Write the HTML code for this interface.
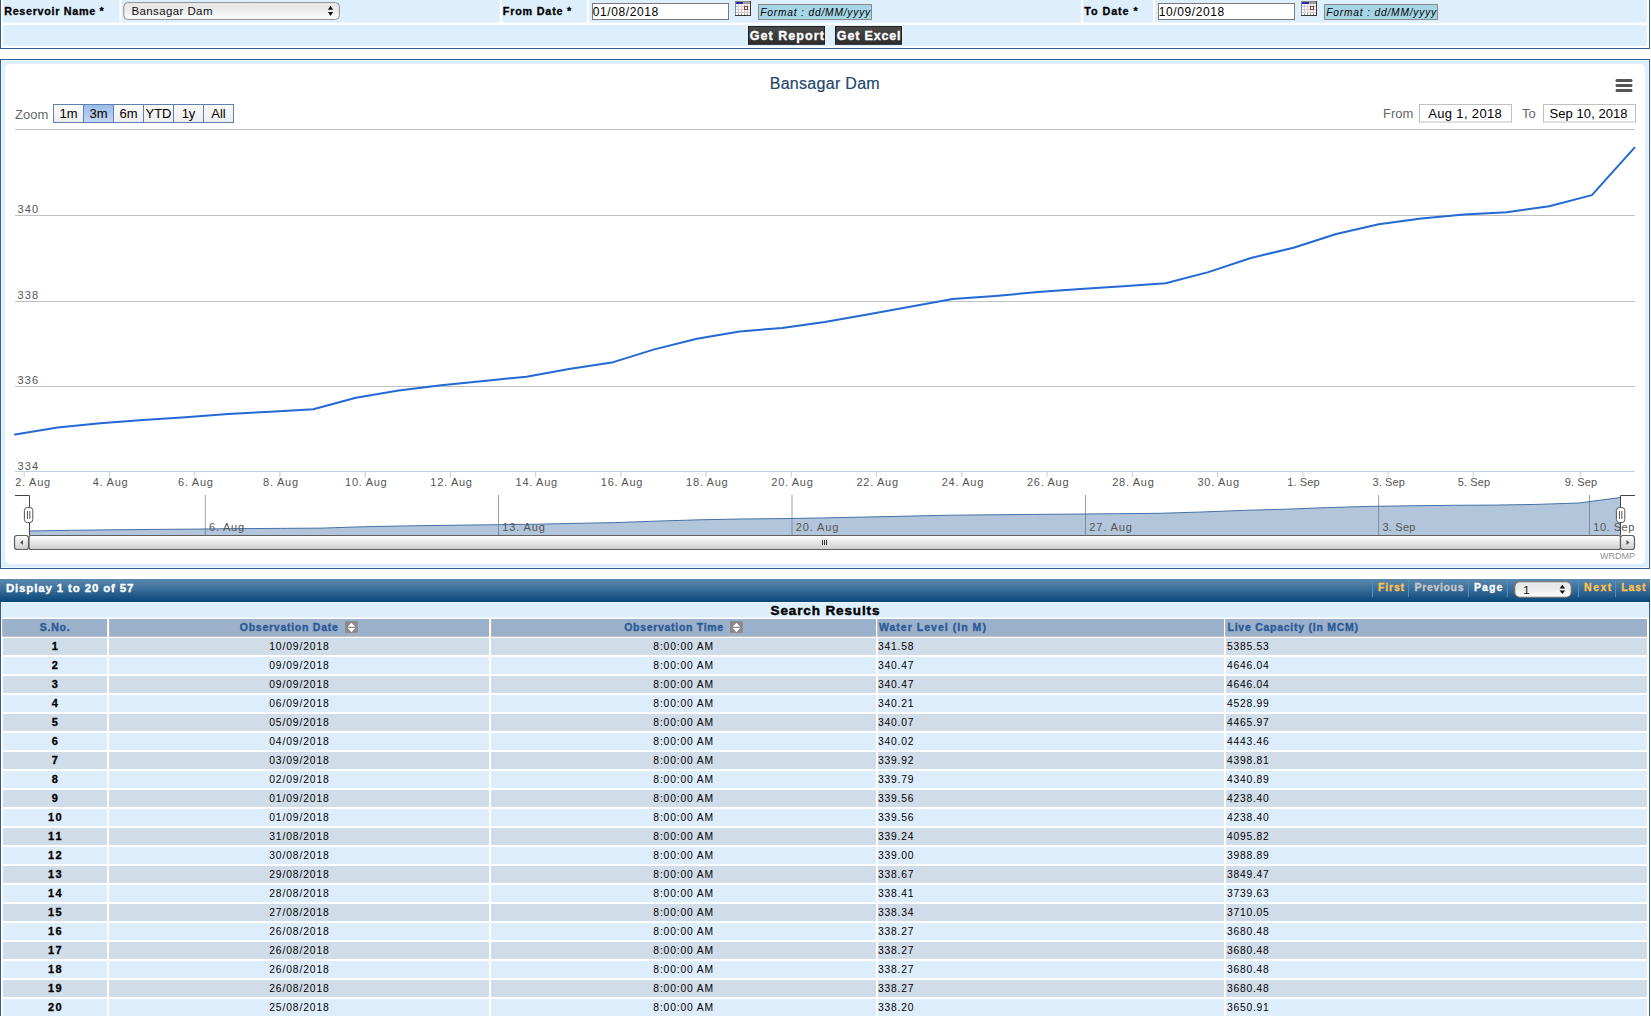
<!DOCTYPE html><html><head><meta charset="utf-8"><style>html,body{margin:0;padding:0;background:#fff;overflow:hidden}svg{display:block}text{font-family:"Liberation Sans",sans-serif;white-space:pre}</style></head><body>
<svg width="1651" height="1016" viewBox="0 0 1651 1016">
<defs>
<linearGradient id="gSel" x1="0" y1="0" x2="0" y2="1"><stop offset="0" stop-color="#f4f4f4"/><stop offset="0.15" stop-color="#e7e7e7"/><stop offset="0.5" stop-color="#ececec"/><stop offset="1" stop-color="#ffffff"/></linearGradient>
<linearGradient id="gBar" x1="0" y1="0" x2="0" y2="1"><stop offset="0" stop-color="#5a89ad"/><stop offset="0.45" stop-color="#3a6e99"/><stop offset="1" stop-color="#06457a"/></linearGradient>
<linearGradient id="gBtn" x1="0" y1="0" x2="0" y2="1"><stop offset="0" stop-color="#fbfbfb"/><stop offset="1" stop-color="#ededed"/></linearGradient>
<linearGradient id="gBtnSel" x1="0" y1="0" x2="0" y2="1"><stop offset="0" stop-color="#9bbbe4"/><stop offset="1" stop-color="#c4d7f4"/></linearGradient>
<linearGradient id="gScroll" x1="0" y1="0" x2="0" y2="1"><stop offset="0" stop-color="#ffffff"/><stop offset="1" stop-color="#cccccc"/></linearGradient>
<linearGradient id="gBtnDark" x1="0" y1="0" x2="0" y2="1"><stop offset="0" stop-color="#4a4a4a"/><stop offset="1" stop-color="#2e2e2e"/></linearGradient>
</defs>
<rect x="0" y="0" width="1" height="49" fill="#305e95"/>
<rect x="1649" y="0" width="1" height="49" fill="#305e95"/>
<rect x="0" y="48" width="1650" height="1" fill="#305e95"/>
<rect x="3" y="0" width="116.5" height="22.6" fill="#ddeefd"/>
<rect x="121.5" y="0" width="378.5" height="22.6" fill="#ddeefd"/>
<rect x="502" y="0" width="85" height="22.6" fill="#ddeefd"/>
<rect x="589" y="0" width="492" height="22.6" fill="#ddeefd"/>
<rect x="1083" y="0" width="70" height="22.6" fill="#ddeefd"/>
<rect x="1155" y="0" width="492" height="22.6" fill="#ddeefd"/>
<rect x="3" y="24.9" width="1644" height="21" fill="#ddeefd"/>
<text x="4.2" y="15.2" font-size="10.8" fill="#000" font-weight="bold" letter-spacing="0" text-anchor="start" font-style="normal" textLength="99.5" lengthAdjust="spacing" stroke="#000" stroke-width="0.3" >Reservoir Name *</text>
<text x="502.8" y="15" font-size="10.8" fill="#000" font-weight="bold" letter-spacing="0" text-anchor="start" font-style="normal" textLength="68.5" lengthAdjust="spacing" stroke="#000" stroke-width="0.3" >From Date *</text>
<text x="1084.2" y="15" font-size="10.8" fill="#000" font-weight="bold" letter-spacing="0" text-anchor="start" font-style="normal" textLength="53.5" lengthAdjust="spacing" stroke="#000" stroke-width="0.3" >To Date *</text>
<rect x="123.8" y="2.6" width="215.6" height="16.8" rx="4" fill="url(#gSel)" stroke="#8e8e8e" stroke-width="1"/>
<text x="131.4" y="14.8" font-size="11.5" fill="#111" font-weight="normal" letter-spacing="0.4" text-anchor="start" font-style="normal" >Bansagar Dam</text>
<path d="M327.9,9.8 L333.1,9.8 L330.5,5.8 Z M327.9,12.1 L333.1,12.1 L330.5,16 Z" fill="#111"/>
<rect x="592.5" y="3.5" width="136" height="16" fill="#fff" stroke="#7a7a7a" stroke-width="1"/>
<text x="592.8" y="16" font-size="12" fill="#000" font-weight="normal" letter-spacing="0.6" text-anchor="start" font-style="normal" >01/08/2018</text>
<rect x="735" y="1" width="16" height="15" fill="#3a3a3a"/>
<rect x="735" y="1" width="15" height="14" fill="#8a8a8a"/>
<rect x="736" y="2" width="14" height="12" fill="#cbcbcb"/>
<rect x="736" y="2" width="14" height="2" fill="#9c9c9c"/><rect x="736" y="2" width="7" height="2" fill="#2d2d9c"/>
<rect x="736" y="4" width="2" height="2" fill="#fff"/>
<rect x="736" y="7" width="2" height="2" fill="#fff"/>
<rect x="736" y="10" width="2" height="2" fill="#fff"/>
<rect x="736" y="13" width="2" height="2" fill="#fff"/>
<rect x="739" y="4" width="2" height="2" fill="#fff"/>
<rect x="739" y="7" width="2" height="2" fill="#fff"/>
<rect x="739" y="10" width="2" height="2" fill="#fff"/>
<rect x="739" y="13" width="2" height="2" fill="#fff"/>
<rect x="742" y="4" width="2" height="2" fill="#fff"/>
<rect x="742" y="7" width="2" height="2" fill="#fff"/>
<rect x="742" y="10" width="2" height="2" fill="#fff"/>
<rect x="742" y="13" width="2" height="2" fill="#fff"/>
<rect x="745" y="4" width="2" height="2" fill="#fff"/>
<rect x="745" y="7" width="2" height="2" fill="#fff"/>
<rect x="745" y="10" width="2" height="2" fill="#fff"/>
<rect x="745" y="13" width="2" height="2" fill="#fff"/>
<rect x="748" y="4" width="2" height="2" fill="#fff"/>
<rect x="748" y="7" width="2" height="2" fill="#fff"/>
<rect x="748" y="10" width="2" height="2" fill="#fff"/>
<rect x="748" y="13" width="2" height="2" fill="#fff"/>
<rect x="744.5" y="6.5" width="3" height="3" fill="#fff" stroke="#a83030" stroke-width="1"/>
<rect x="758.5" y="4.5" width="113" height="15" fill="#a6d6e6" stroke="#8a8a8a" stroke-width="1"/>
<text x="760.2" y="15.6" font-size="10.2" fill="#000" font-weight="normal" letter-spacing="0" text-anchor="start" font-style="italic" textLength="110" lengthAdjust="spacing" >Format : dd/MM/yyyy</text>
<rect x="1158.5" y="3.5" width="136" height="16" fill="#fff" stroke="#7a7a7a" stroke-width="1"/>
<text x="1158.8" y="16" font-size="12" fill="#000" font-weight="normal" letter-spacing="0.6" text-anchor="start" font-style="normal" >10/09/2018</text>
<rect x="1301" y="1" width="16" height="15" fill="#3a3a3a"/>
<rect x="1301" y="1" width="15" height="14" fill="#8a8a8a"/>
<rect x="1302" y="2" width="14" height="12" fill="#cbcbcb"/>
<rect x="1302" y="2" width="14" height="2" fill="#9c9c9c"/><rect x="1302" y="2" width="7" height="2" fill="#2d2d9c"/>
<rect x="1302" y="4" width="2" height="2" fill="#fff"/>
<rect x="1302" y="7" width="2" height="2" fill="#fff"/>
<rect x="1302" y="10" width="2" height="2" fill="#fff"/>
<rect x="1302" y="13" width="2" height="2" fill="#fff"/>
<rect x="1305" y="4" width="2" height="2" fill="#fff"/>
<rect x="1305" y="7" width="2" height="2" fill="#fff"/>
<rect x="1305" y="10" width="2" height="2" fill="#fff"/>
<rect x="1305" y="13" width="2" height="2" fill="#fff"/>
<rect x="1308" y="4" width="2" height="2" fill="#fff"/>
<rect x="1308" y="7" width="2" height="2" fill="#fff"/>
<rect x="1308" y="10" width="2" height="2" fill="#fff"/>
<rect x="1308" y="13" width="2" height="2" fill="#fff"/>
<rect x="1311" y="4" width="2" height="2" fill="#fff"/>
<rect x="1311" y="7" width="2" height="2" fill="#fff"/>
<rect x="1311" y="10" width="2" height="2" fill="#fff"/>
<rect x="1311" y="13" width="2" height="2" fill="#fff"/>
<rect x="1314" y="4" width="2" height="2" fill="#fff"/>
<rect x="1314" y="7" width="2" height="2" fill="#fff"/>
<rect x="1314" y="10" width="2" height="2" fill="#fff"/>
<rect x="1314" y="13" width="2" height="2" fill="#fff"/>
<rect x="1310.5" y="6.5" width="3" height="3" fill="#fff" stroke="#a83030" stroke-width="1"/>
<rect x="1324.5" y="4.5" width="113" height="15" fill="#a6d6e6" stroke="#8a8a8a" stroke-width="1"/>
<text x="1326.2" y="15.6" font-size="10.2" fill="#000" font-weight="normal" letter-spacing="0" text-anchor="start" font-style="italic" textLength="110" lengthAdjust="spacing" >Format : dd/MM/yyyy</text>
<rect x="748.5" y="26.5" width="76" height="17.8" fill="url(#gBtnDark)" stroke="#222"/>
<text x="749.8" y="39.7" font-size="12.5" fill="#fff" font-weight="bold" letter-spacing="0" text-anchor="start" font-style="normal" textLength="74" lengthAdjust="spacing" stroke="#fff" stroke-width="0.35" >Get Report</text>
<rect x="835.5" y="26.5" width="66" height="17.8" fill="url(#gBtnDark)" stroke="#222"/>
<text x="836.8" y="39.7" font-size="12.5" fill="#fff" font-weight="bold" letter-spacing="0" text-anchor="start" font-style="normal" textLength="63.8" lengthAdjust="spacing" stroke="#fff" stroke-width="0.35" >Get Excel</text>
<rect x="0" y="59" width="1650" height="510" fill="#305e95"/>
<rect x="1" y="60" width="1648" height="508" fill="#eef8ff"/>
<rect x="2" y="61" width="1646" height="506" fill="#ddeefd"/>
<rect x="4.9" y="64" width="1640.2" height="500" rx="5" fill="#fff"/>
<text x="824.7" y="88.9" font-size="16" fill="#23466b" font-weight="normal" letter-spacing="0" text-anchor="middle" font-style="normal" textLength="110" lengthAdjust="spacing" stroke="#23466b" stroke-width="0.2" >Bansagar Dam</text>
<line x1="1617" y1="80.5" x2="1631" y2="80.5" stroke="#555" stroke-width="3" stroke-linecap="round"/>
<line x1="1617" y1="85.5" x2="1631" y2="85.5" stroke="#555" stroke-width="3" stroke-linecap="round"/>
<line x1="1617" y1="90.5" x2="1631" y2="90.5" stroke="#555" stroke-width="3" stroke-linecap="round"/>
<text x="15" y="118.6" font-size="13" fill="#666" font-weight="normal" letter-spacing="0" text-anchor="start" font-style="normal" >Zoom</text>
<rect x="53.5" y="104.5" width="30" height="18" fill="url(#gBtn)" stroke="#5d80b0" stroke-width="1"/>
<text x="68.5" y="118.3" font-size="13" fill="#000" font-weight="normal" letter-spacing="0" text-anchor="middle" font-style="normal" >1m</text>
<rect x="83.5" y="104.5" width="30" height="18" fill="url(#gBtnSel)" stroke="#5d80b0" stroke-width="1"/>
<text x="98.5" y="118.3" font-size="13" fill="#000" font-weight="normal" letter-spacing="0" text-anchor="middle" font-style="normal" >3m</text>
<rect x="113.5" y="104.5" width="30" height="18" fill="url(#gBtn)" stroke="#5d80b0" stroke-width="1"/>
<text x="128.5" y="118.3" font-size="13" fill="#000" font-weight="normal" letter-spacing="0" text-anchor="middle" font-style="normal" >6m</text>
<rect x="143.5" y="104.5" width="30" height="18" fill="url(#gBtn)" stroke="#5d80b0" stroke-width="1"/>
<text x="158.5" y="118.3" font-size="13" fill="#000" font-weight="normal" letter-spacing="0" text-anchor="middle" font-style="normal" >YTD</text>
<rect x="173.5" y="104.5" width="30" height="18" fill="url(#gBtn)" stroke="#5d80b0" stroke-width="1"/>
<text x="188.5" y="118.3" font-size="13" fill="#000" font-weight="normal" letter-spacing="0" text-anchor="middle" font-style="normal" >1y</text>
<rect x="203.5" y="104.5" width="30" height="18" fill="url(#gBtn)" stroke="#5d80b0" stroke-width="1"/>
<text x="218.5" y="118.3" font-size="13" fill="#000" font-weight="normal" letter-spacing="0" text-anchor="middle" font-style="normal" >All</text>
<text x="1383" y="118" font-size="13" fill="#666" font-weight="normal" letter-spacing="0" text-anchor="start" font-style="normal" >From</text>
<rect x="1419.5" y="104.5" width="92" height="17.5" fill="#fff" stroke="#c0c0c0"/>
<text x="1465" y="118.3" font-size="13" fill="#000" font-weight="normal" letter-spacing="0" text-anchor="middle" font-style="normal" textLength="73.5" lengthAdjust="spacing" >Aug 1, 2018</text>
<text x="1522" y="118" font-size="13" fill="#666" font-weight="normal" letter-spacing="0" text-anchor="start" font-style="normal" >To</text>
<rect x="1543.5" y="104.5" width="92" height="17.5" fill="#fff" stroke="#c0c0c0"/>
<text x="1588.6" y="118.3" font-size="13" fill="#000" font-weight="normal" letter-spacing="0" text-anchor="middle" font-style="normal" textLength="78" lengthAdjust="spacing" >Sep 10, 2018</text>
<rect x="15" y="129" width="1620" height="1" fill="#c0c0c0"/>
<rect x="15" y="215" width="1620" height="1" fill="#c0c0c0"/>
<text x="17.5" y="212.8" font-size="11" fill="#555" font-weight="normal" letter-spacing="0" text-anchor="start" font-style="normal" textLength="20.5" lengthAdjust="spacing" >340</text>
<rect x="15" y="301" width="1620" height="1" fill="#c0c0c0"/>
<text x="17.5" y="298.8" font-size="11" fill="#555" font-weight="normal" letter-spacing="0" text-anchor="start" font-style="normal" textLength="20.5" lengthAdjust="spacing" >338</text>
<rect x="15" y="386" width="1620" height="1" fill="#c0c0c0"/>
<text x="17.5" y="383.8" font-size="11" fill="#555" font-weight="normal" letter-spacing="0" text-anchor="start" font-style="normal" textLength="20.5" lengthAdjust="spacing" >336</text>
<text x="17.5" y="469.7" font-size="11" fill="#555" font-weight="normal" letter-spacing="0" text-anchor="start" font-style="normal" textLength="20.5" lengthAdjust="spacing" >334</text>
<rect x="15" y="471" width="1620" height="1" fill="#c0d0e0"/>
<rect x="23.7" y="472" width="1" height="5" fill="#c0d0e0"/>
<text x="15.2" y="486.2" font-size="11" fill="#555" font-weight="normal" letter-spacing="0" text-anchor="start" font-style="normal" textLength="35" lengthAdjust="spacing" >2. Aug</text>
<rect x="108.9" y="472" width="1" height="5" fill="#c0d0e0"/>
<text x="110.14" y="486.2" font-size="11" fill="#555" font-weight="normal" letter-spacing="0" text-anchor="middle" font-style="normal" textLength="35" lengthAdjust="spacing" >4. Aug</text>
<rect x="194.2" y="472" width="1" height="5" fill="#c0d0e0"/>
<text x="195.37999999999997" y="486.2" font-size="11" fill="#555" font-weight="normal" letter-spacing="0" text-anchor="middle" font-style="normal" textLength="35" lengthAdjust="spacing" >6. Aug</text>
<rect x="279.4" y="472" width="1" height="5" fill="#c0d0e0"/>
<text x="280.61999999999995" y="486.2" font-size="11" fill="#555" font-weight="normal" letter-spacing="0" text-anchor="middle" font-style="normal" textLength="35" lengthAdjust="spacing" >8. Aug</text>
<rect x="364.7" y="472" width="1" height="5" fill="#c0d0e0"/>
<text x="365.85999999999996" y="486.2" font-size="11" fill="#555" font-weight="normal" letter-spacing="0" text-anchor="middle" font-style="normal" textLength="41.5" lengthAdjust="spacing" >10. Aug</text>
<rect x="449.9" y="472" width="1" height="5" fill="#c0d0e0"/>
<text x="451.09999999999997" y="486.2" font-size="11" fill="#555" font-weight="normal" letter-spacing="0" text-anchor="middle" font-style="normal" textLength="41.5" lengthAdjust="spacing" >12. Aug</text>
<rect x="535.1" y="472" width="1" height="5" fill="#c0d0e0"/>
<text x="536.34" y="486.2" font-size="11" fill="#555" font-weight="normal" letter-spacing="0" text-anchor="middle" font-style="normal" textLength="41.5" lengthAdjust="spacing" >14. Aug</text>
<rect x="620.4" y="472" width="1" height="5" fill="#c0d0e0"/>
<text x="621.58" y="486.2" font-size="11" fill="#555" font-weight="normal" letter-spacing="0" text-anchor="middle" font-style="normal" textLength="41.5" lengthAdjust="spacing" >16. Aug</text>
<rect x="705.6" y="472" width="1" height="5" fill="#c0d0e0"/>
<text x="706.82" y="486.2" font-size="11" fill="#555" font-weight="normal" letter-spacing="0" text-anchor="middle" font-style="normal" textLength="41.5" lengthAdjust="spacing" >18. Aug</text>
<rect x="790.9" y="472" width="1" height="5" fill="#c0d0e0"/>
<text x="792.0600000000001" y="486.2" font-size="11" fill="#555" font-weight="normal" letter-spacing="0" text-anchor="middle" font-style="normal" textLength="41.5" lengthAdjust="spacing" >20. Aug</text>
<rect x="876.1" y="472" width="1" height="5" fill="#c0d0e0"/>
<text x="877.3000000000001" y="486.2" font-size="11" fill="#555" font-weight="normal" letter-spacing="0" text-anchor="middle" font-style="normal" textLength="41.5" lengthAdjust="spacing" >22. Aug</text>
<rect x="961.3" y="472" width="1" height="5" fill="#c0d0e0"/>
<text x="962.5400000000001" y="486.2" font-size="11" fill="#555" font-weight="normal" letter-spacing="0" text-anchor="middle" font-style="normal" textLength="41.5" lengthAdjust="spacing" >24. Aug</text>
<rect x="1046.6" y="472" width="1" height="5" fill="#c0d0e0"/>
<text x="1047.78" y="486.2" font-size="11" fill="#555" font-weight="normal" letter-spacing="0" text-anchor="middle" font-style="normal" textLength="41.5" lengthAdjust="spacing" >26. Aug</text>
<rect x="1131.8" y="472" width="1" height="5" fill="#c0d0e0"/>
<text x="1133.02" y="486.2" font-size="11" fill="#555" font-weight="normal" letter-spacing="0" text-anchor="middle" font-style="normal" textLength="41.5" lengthAdjust="spacing" >28. Aug</text>
<rect x="1217.1" y="472" width="1" height="5" fill="#c0d0e0"/>
<text x="1218.26" y="486.2" font-size="11" fill="#555" font-weight="normal" letter-spacing="0" text-anchor="middle" font-style="normal" textLength="41.5" lengthAdjust="spacing" >30. Aug</text>
<rect x="1302.3" y="472" width="1" height="5" fill="#c0d0e0"/>
<text x="1303.5" y="486.2" font-size="11" fill="#555" font-weight="normal" letter-spacing="0" text-anchor="middle" font-style="normal" textLength="32.3" lengthAdjust="spacing" >1. Sep</text>
<rect x="1387.5" y="472" width="1" height="5" fill="#c0d0e0"/>
<text x="1388.74" y="486.2" font-size="11" fill="#555" font-weight="normal" letter-spacing="0" text-anchor="middle" font-style="normal" textLength="32.3" lengthAdjust="spacing" >3. Sep</text>
<rect x="1472.8" y="472" width="1" height="5" fill="#c0d0e0"/>
<text x="1473.98" y="486.2" font-size="11" fill="#555" font-weight="normal" letter-spacing="0" text-anchor="middle" font-style="normal" textLength="32.3" lengthAdjust="spacing" >5. Sep</text>
<rect x="1579.8" y="472" width="1" height="5" fill="#c0d0e0"/>
<text x="1581.0" y="486.2" font-size="11" fill="#555" font-weight="normal" letter-spacing="0" text-anchor="middle" font-style="normal" textLength="32.3" lengthAdjust="spacing" >9. Sep</text>
<polyline points="15.0,434.4 57.6,427.6 100.2,423.3 142.9,419.9 185.5,417.3 228.1,413.9 270.7,411.8 313.3,409.2 355.9,397.7 398.6,390.4 441.2,385.3 483.8,381.0 526.4,376.7 569.0,369.0 611.7,362.6 654.3,349.4 696.9,338.7 739.5,331.4 782.1,328.0 824.7,322.0 867.4,314.4 910.0,306.7 952.6,299.0 995.2,296.0 1037.8,292.1 1080.5,289.1 1123.1,286.2 1165.7,283.2 1208.3,272.1 1250.9,258.0 1293.5,247.7 1336.2,234.0 1378.8,224.2 1421.4,218.6 1464.0,214.4 1506.6,212.2 1549.2,206.2 1591.9,195.1 1634.5,147.7" fill="none" stroke="#2369d4" stroke-width="2" stroke-linejoin="round" stroke-linecap="round"/>
<rect x="204.8" y="495" width="1" height="40.5" fill="#a0a0a0"/>
<rect x="498.0" y="495" width="1" height="40.5" fill="#a0a0a0"/>
<rect x="791.5" y="495" width="1" height="40.5" fill="#a0a0a0"/>
<rect x="1085.0" y="495" width="1" height="40.5" fill="#a0a0a0"/>
<rect x="1378.1" y="495" width="1" height="40.5" fill="#a0a0a0"/>
<rect x="1589.0" y="495" width="1" height="40.5" fill="#a0a0a0"/>
<polygon points="29.5,535.4 29.5,531.0 71.4,530.3 113.2,529.8 155.1,529.4 197.0,529.1 238.8,528.6 280.7,528.4 322.6,528.1 364.5,526.7 406.3,525.9 448.2,525.3 490.1,524.8 531.9,524.3 573.8,523.4 615.7,522.6 657.5,521.1 699.4,519.8 741.3,519.0 783.2,518.6 825.0,517.9 866.9,517.0 908.8,516.1 950.6,515.2 992.5,514.8 1034.4,514.4 1076.2,514.1 1118.1,513.7 1160.0,513.3 1201.9,512.0 1243.7,510.4 1285.6,509.2 1327.5,507.6 1369.3,506.4 1411.2,505.8 1453.1,505.3 1494.9,505.1 1536.8,504.4 1578.7,503.0 1620.6,497.5 1620.6,535.4" fill="#4572a7" fill-opacity="0.41"/>
<polyline points="29.5,531.0 71.4,530.3 113.2,529.8 155.1,529.4 197.0,529.1 238.8,528.6 280.7,528.4 322.6,528.1 364.5,526.7 406.3,525.9 448.2,525.3 490.1,524.8 531.9,524.3 573.8,523.4 615.7,522.6 657.5,521.1 699.4,519.8 741.3,519.0 783.2,518.6 825.0,517.9 866.9,517.0 908.8,516.1 950.6,515.2 992.5,514.8 1034.4,514.4 1076.2,514.1 1118.1,513.7 1160.0,513.3 1201.9,512.0 1243.7,510.4 1285.6,509.2 1327.5,507.6 1369.3,506.4 1411.2,505.8 1453.1,505.3 1494.9,505.1 1536.8,504.4 1578.7,503.0 1620.6,497.5" fill="none" stroke="#4572a7" stroke-width="1"/>
<text x="209.10000000000002" y="531.2" font-size="11" fill="#555" font-weight="normal" letter-spacing="0" text-anchor="start" font-style="normal" textLength="35" lengthAdjust="spacing" >6. Aug</text>
<text x="502.3" y="531.2" font-size="11" fill="#555" font-weight="normal" letter-spacing="0" text-anchor="start" font-style="normal" textLength="42.5" lengthAdjust="spacing" >13. Aug</text>
<text x="795.8" y="531.2" font-size="11" fill="#555" font-weight="normal" letter-spacing="0" text-anchor="start" font-style="normal" textLength="42.5" lengthAdjust="spacing" >20. Aug</text>
<text x="1089.3" y="531.2" font-size="11" fill="#555" font-weight="normal" letter-spacing="0" text-anchor="start" font-style="normal" textLength="42.5" lengthAdjust="spacing" >27. Aug</text>
<text x="1382.3999999999999" y="531.2" font-size="11" fill="#555" font-weight="normal" letter-spacing="0" text-anchor="start" font-style="normal" textLength="33" lengthAdjust="spacing" >3. Sep</text>
<text x="1593.3" y="531.2" font-size="11" fill="#555" font-weight="normal" letter-spacing="0" text-anchor="start" font-style="normal" textLength="41" lengthAdjust="spacing" >10. Sep</text>
<path d="M15,495.5 H29.5 V535.5 M1620.5,535.5 V495.5 H1635" fill="none" stroke="#444" stroke-width="1"/>
<rect x="24.400000000000002" y="507.5" width="8.4" height="15" rx="3" fill="#fff" stroke="#555" stroke-width="1"/>
<rect x="26.900000000000002" y="511" width="1" height="8" fill="#555"/><rect x="29.3" y="511" width="1" height="8" fill="#555"/>
<rect x="1616.3999999999999" y="507.5" width="8.4" height="15" rx="3" fill="#fff" stroke="#555" stroke-width="1"/>
<rect x="1618.8999999999999" y="511" width="1" height="8" fill="#555"/><rect x="1621.3" y="511" width="1" height="8" fill="#555"/>
<rect x="29" y="535.5" width="1591.5" height="14" rx="2" fill="url(#gScroll)" stroke="#5f5f5f" stroke-width="1.2"/>
<rect x="14.5" y="535.5" width="14" height="14" rx="2.5" fill="url(#gScroll)" stroke="#5f5f5f" stroke-width="1.2"/>
<rect x="1620.5" y="535.5" width="14" height="14" rx="2.5" fill="url(#gScroll)" stroke="#5f5f5f" stroke-width="1.2"/>
<path d="M20,542.5 L23,540 L23,545 Z" fill="#555"/><path d="M1629.5,542.5 L1626.5,540 L1626.5,545 Z" fill="#555"/>
<path d="M822.5,540 V545 M824.5,540 V545 M826.5,540 V545" stroke="#333" stroke-width="1"/>
<text x="1635" y="558.8" font-size="9" fill="#909090" font-weight="normal" letter-spacing="0" text-anchor="end" font-style="normal" >WRDMP</text>
<rect x="0" y="579" width="1650" height="23" fill="url(#gBar)"/>
<text x="5.9" y="592" font-size="11.5" fill="#fff" font-weight="bold" letter-spacing="0" text-anchor="start" font-style="normal" textLength="127.5" lengthAdjust="spacing" stroke="#fff" stroke-width="0.35" >Display 1 to 20 of 57</text>
<rect x="1372.0" y="580" width="1" height="17" fill="#4f8fcc"/>
<rect x="1408.0" y="580" width="1" height="17" fill="#4f8fcc"/>
<rect x="1467.9" y="580" width="1" height="17" fill="#4f8fcc"/>
<rect x="1506.8" y="580" width="1" height="17" fill="#4f8fcc"/>
<rect x="1578.0" y="580" width="1" height="17" fill="#4f8fcc"/>
<rect x="1615.0" y="580" width="1" height="17" fill="#4f8fcc"/>
<text x="1378.1" y="590.9" font-size="10.5" fill="#ffc34d" font-weight="bold" letter-spacing="0" text-anchor="start" font-style="normal" textLength="26" lengthAdjust="spacing" stroke="#ffc34d" stroke-width="0.3" >First</text>
<text x="1414.5" y="590.9" font-size="10.5" fill="#c9c9c9" font-weight="bold" letter-spacing="0" text-anchor="start" font-style="normal" textLength="49" lengthAdjust="spacing" stroke="#c9c9c9" stroke-width="0.3" >Previous</text>
<text x="1474.0" y="590.9" font-size="10.5" fill="#ffffff" font-weight="bold" letter-spacing="0" text-anchor="start" font-style="normal" textLength="28.3" lengthAdjust="spacing" stroke="#ffffff" stroke-width="0.3" >Page</text>
<text x="1584.1" y="590.9" font-size="10.5" fill="#ffc34d" font-weight="bold" letter-spacing="0" text-anchor="start" font-style="normal" textLength="27.1" lengthAdjust="spacing" stroke="#ffc34d" stroke-width="0.3" >Next</text>
<text x="1621.2" y="590.9" font-size="10.5" fill="#ffc34d" font-weight="bold" letter-spacing="0" text-anchor="start" font-style="normal" textLength="24.3" lengthAdjust="spacing" stroke="#ffc34d" stroke-width="0.3" >Last</text>
<rect x="1514.8" y="581.8" width="56.4" height="15.4" rx="5" fill="url(#gSel)" stroke="#7d6e62" stroke-width="1"/>
<text x="1523.3" y="593.9" font-size="11.5" fill="#111" font-weight="normal" letter-spacing="0" text-anchor="start" font-style="normal" >1</text>
<path d="M1559.6,588.6 L1565.1,588.6 L1562.35,584.8 Z M1559.6,590.4 L1565.1,590.4 L1562.35,594.1 Z" fill="#111"/>
<rect x="0" y="602" width="1" height="415" fill="#305e95"/>
<rect x="1649" y="602" width="1" height="415" fill="#305e95"/>
<rect x="1" y="602" width="1648" height="15.6" fill="#ddeefd"/>
<rect x="1" y="602" width="1648" height="1" fill="#eef7ff"/><rect x="1" y="602" width="1" height="15.6" fill="#eef7ff"/>
<text x="825" y="614.9" font-size="13.5" fill="#000" font-weight="bold" letter-spacing="0" text-anchor="middle" font-style="normal" textLength="109" lengthAdjust="spacing" stroke="#000" stroke-width="0.45" >Search Results</text>
<rect x="2.3" y="619" width="104.8" height="17.6" fill="#9bb0cb"/>
<rect x="2.3" y="619" width="1" height="17.6" fill="#b4b4b4"/><rect x="2.3" y="635.8" width="104.8" height="0.8" fill="#bdb9b4"/>
<rect x="109" y="619" width="380.0" height="17.6" fill="#9bb0cb"/>
<rect x="109" y="619" width="1" height="17.6" fill="#b4b4b4"/><rect x="109" y="635.8" width="380.0" height="0.8" fill="#bdb9b4"/>
<rect x="491" y="619" width="385.0" height="17.6" fill="#9bb0cb"/>
<rect x="491" y="619" width="1" height="17.6" fill="#b4b4b4"/><rect x="491" y="635.8" width="385.0" height="0.8" fill="#bdb9b4"/>
<rect x="877.5" y="619" width="346.5" height="17.6" fill="#9bb0cb"/>
<rect x="877.5" y="619" width="1" height="17.6" fill="#b4b4b4"/><rect x="877.5" y="635.8" width="346.5" height="0.8" fill="#bdb9b4"/>
<rect x="1225.3" y="619" width="421.7" height="17.6" fill="#9bb0cb"/>
<rect x="1225.3" y="619" width="1" height="17.6" fill="#b4b4b4"/><rect x="1225.3" y="635.8" width="421.7" height="0.8" fill="#bdb9b4"/>
<text x="54.7" y="631" font-size="10.5" fill="#2b5a96" font-weight="bold" letter-spacing="0" text-anchor="middle" font-style="normal" textLength="30" lengthAdjust="spacing" stroke="#2b5a96" stroke-width="0.35" >S.No.</text>
<text x="239.8" y="630.7" font-size="10.5" fill="#2b5a96" font-weight="bold" letter-spacing="0" text-anchor="start" font-style="normal" textLength="98" lengthAdjust="spacing" stroke="#2b5a96" stroke-width="0.35" >Observation Date</text>
<text x="624.2" y="630.7" font-size="10.5" fill="#2b5a96" font-weight="bold" letter-spacing="0" text-anchor="start" font-style="normal" textLength="99" lengthAdjust="spacing" stroke="#2b5a96" stroke-width="0.35" >Observation Time</text>
<text x="878.9" y="630.7" font-size="10.5" fill="#2b5a96" font-weight="bold" letter-spacing="0" text-anchor="start" font-style="normal" textLength="107" lengthAdjust="spacing" stroke="#2b5a96" stroke-width="0.35" >Water Level (In M)</text>
<text x="1227.5" y="630.7" font-size="10.5" fill="#2b5a96" font-weight="bold" letter-spacing="0" text-anchor="start" font-style="normal" textLength="130.5" lengthAdjust="spacing" stroke="#2b5a96" stroke-width="0.35" >Live Capacity (In MCM)</text>
<rect x="345" y="621" width="12.8" height="11.9" fill="#8a8a8a"/>
<path d="M347.7,626.8 L355.2,626.8 L351.45,622.7 Z M347.7,628 L355.2,628 L351.45,632.2 Z" fill="#fff"/>
<rect x="730" y="621" width="12.8" height="11.9" fill="#8a8a8a"/>
<path d="M732.7,626.8 L740.2,626.8 L736.45,622.7 Z M732.7,628 L740.2,628 L736.45,632.2 Z" fill="#fff"/>
<rect x="3" y="638" width="104.1" height="17" fill="#d0dce8"/>
<rect x="109" y="638" width="380.0" height="17" fill="#d0dce8"/>
<rect x="491" y="638" width="385.0" height="17" fill="#d0dce8"/>
<rect x="878" y="638" width="346.0" height="17" fill="#d0dce8"/>
<rect x="1226" y="638" width="421.0" height="17" fill="#d0dce8"/>
<text x="54.8" y="649.8" font-size="11" fill="#000" font-weight="bold" letter-spacing="0" text-anchor="middle" font-style="normal" textLength="6.8" lengthAdjust="spacing" stroke="#000" stroke-width="0.3" >1</text>
<text x="299" y="649.8" font-size="10.3" fill="#000" font-weight="normal" letter-spacing="0" text-anchor="middle" font-style="normal" textLength="59.7" lengthAdjust="spacing" >10/09/2018</text>
<text x="683.2" y="649.8" font-size="10.3" fill="#000" font-weight="normal" letter-spacing="0" text-anchor="middle" font-style="normal" textLength="59.8" lengthAdjust="spacing" >8:00:00 AM</text>
<text x="878.1" y="649.8" font-size="10.3" fill="#000" font-weight="normal" letter-spacing="0" text-anchor="start" font-style="normal" textLength="35.4" lengthAdjust="spacing" >341.58</text>
<text x="1227" y="649.8" font-size="10.3" fill="#000" font-weight="normal" letter-spacing="0" text-anchor="start" font-style="normal" textLength="41.7" lengthAdjust="spacing" >5385.53</text>
<rect x="3" y="657" width="104.1" height="17" fill="#deedfb"/>
<rect x="109" y="657" width="380.0" height="17" fill="#deedfb"/>
<rect x="491" y="657" width="385.0" height="17" fill="#deedfb"/>
<rect x="878" y="657" width="346.0" height="17" fill="#deedfb"/>
<rect x="1226" y="657" width="421.0" height="17" fill="#deedfb"/>
<text x="54.8" y="668.8" font-size="11" fill="#000" font-weight="bold" letter-spacing="0" text-anchor="middle" font-style="normal" textLength="6.8" lengthAdjust="spacing" stroke="#000" stroke-width="0.3" >2</text>
<text x="299" y="668.8" font-size="10.3" fill="#000" font-weight="normal" letter-spacing="0" text-anchor="middle" font-style="normal" textLength="59.7" lengthAdjust="spacing" >09/09/2018</text>
<text x="683.2" y="668.8" font-size="10.3" fill="#000" font-weight="normal" letter-spacing="0" text-anchor="middle" font-style="normal" textLength="59.8" lengthAdjust="spacing" >8:00:00 AM</text>
<text x="878.1" y="668.8" font-size="10.3" fill="#000" font-weight="normal" letter-spacing="0" text-anchor="start" font-style="normal" textLength="35.4" lengthAdjust="spacing" >340.47</text>
<text x="1227" y="668.8" font-size="10.3" fill="#000" font-weight="normal" letter-spacing="0" text-anchor="start" font-style="normal" textLength="41.7" lengthAdjust="spacing" >4646.04</text>
<rect x="3" y="676" width="104.1" height="17" fill="#d0dce8"/>
<rect x="109" y="676" width="380.0" height="17" fill="#d0dce8"/>
<rect x="491" y="676" width="385.0" height="17" fill="#d0dce8"/>
<rect x="878" y="676" width="346.0" height="17" fill="#d0dce8"/>
<rect x="1226" y="676" width="421.0" height="17" fill="#d0dce8"/>
<text x="54.8" y="687.8" font-size="11" fill="#000" font-weight="bold" letter-spacing="0" text-anchor="middle" font-style="normal" textLength="6.8" lengthAdjust="spacing" stroke="#000" stroke-width="0.3" >3</text>
<text x="299" y="687.8" font-size="10.3" fill="#000" font-weight="normal" letter-spacing="0" text-anchor="middle" font-style="normal" textLength="59.7" lengthAdjust="spacing" >09/09/2018</text>
<text x="683.2" y="687.8" font-size="10.3" fill="#000" font-weight="normal" letter-spacing="0" text-anchor="middle" font-style="normal" textLength="59.8" lengthAdjust="spacing" >8:00:00 AM</text>
<text x="878.1" y="687.8" font-size="10.3" fill="#000" font-weight="normal" letter-spacing="0" text-anchor="start" font-style="normal" textLength="35.4" lengthAdjust="spacing" >340.47</text>
<text x="1227" y="687.8" font-size="10.3" fill="#000" font-weight="normal" letter-spacing="0" text-anchor="start" font-style="normal" textLength="41.7" lengthAdjust="spacing" >4646.04</text>
<rect x="3" y="695" width="104.1" height="17" fill="#deedfb"/>
<rect x="109" y="695" width="380.0" height="17" fill="#deedfb"/>
<rect x="491" y="695" width="385.0" height="17" fill="#deedfb"/>
<rect x="878" y="695" width="346.0" height="17" fill="#deedfb"/>
<rect x="1226" y="695" width="421.0" height="17" fill="#deedfb"/>
<text x="54.8" y="706.8" font-size="11" fill="#000" font-weight="bold" letter-spacing="0" text-anchor="middle" font-style="normal" textLength="6.8" lengthAdjust="spacing" stroke="#000" stroke-width="0.3" >4</text>
<text x="299" y="706.8" font-size="10.3" fill="#000" font-weight="normal" letter-spacing="0" text-anchor="middle" font-style="normal" textLength="59.7" lengthAdjust="spacing" >06/09/2018</text>
<text x="683.2" y="706.8" font-size="10.3" fill="#000" font-weight="normal" letter-spacing="0" text-anchor="middle" font-style="normal" textLength="59.8" lengthAdjust="spacing" >8:00:00 AM</text>
<text x="878.1" y="706.8" font-size="10.3" fill="#000" font-weight="normal" letter-spacing="0" text-anchor="start" font-style="normal" textLength="35.4" lengthAdjust="spacing" >340.21</text>
<text x="1227" y="706.8" font-size="10.3" fill="#000" font-weight="normal" letter-spacing="0" text-anchor="start" font-style="normal" textLength="41.7" lengthAdjust="spacing" >4528.99</text>
<rect x="3" y="714" width="104.1" height="17" fill="#d0dce8"/>
<rect x="109" y="714" width="380.0" height="17" fill="#d0dce8"/>
<rect x="491" y="714" width="385.0" height="17" fill="#d0dce8"/>
<rect x="878" y="714" width="346.0" height="17" fill="#d0dce8"/>
<rect x="1226" y="714" width="421.0" height="17" fill="#d0dce8"/>
<text x="54.8" y="725.8" font-size="11" fill="#000" font-weight="bold" letter-spacing="0" text-anchor="middle" font-style="normal" textLength="6.8" lengthAdjust="spacing" stroke="#000" stroke-width="0.3" >5</text>
<text x="299" y="725.8" font-size="10.3" fill="#000" font-weight="normal" letter-spacing="0" text-anchor="middle" font-style="normal" textLength="59.7" lengthAdjust="spacing" >05/09/2018</text>
<text x="683.2" y="725.8" font-size="10.3" fill="#000" font-weight="normal" letter-spacing="0" text-anchor="middle" font-style="normal" textLength="59.8" lengthAdjust="spacing" >8:00:00 AM</text>
<text x="878.1" y="725.8" font-size="10.3" fill="#000" font-weight="normal" letter-spacing="0" text-anchor="start" font-style="normal" textLength="35.4" lengthAdjust="spacing" >340.07</text>
<text x="1227" y="725.8" font-size="10.3" fill="#000" font-weight="normal" letter-spacing="0" text-anchor="start" font-style="normal" textLength="41.7" lengthAdjust="spacing" >4465.97</text>
<rect x="3" y="733" width="104.1" height="17" fill="#deedfb"/>
<rect x="109" y="733" width="380.0" height="17" fill="#deedfb"/>
<rect x="491" y="733" width="385.0" height="17" fill="#deedfb"/>
<rect x="878" y="733" width="346.0" height="17" fill="#deedfb"/>
<rect x="1226" y="733" width="421.0" height="17" fill="#deedfb"/>
<text x="54.8" y="744.8" font-size="11" fill="#000" font-weight="bold" letter-spacing="0" text-anchor="middle" font-style="normal" textLength="6.8" lengthAdjust="spacing" stroke="#000" stroke-width="0.3" >6</text>
<text x="299" y="744.8" font-size="10.3" fill="#000" font-weight="normal" letter-spacing="0" text-anchor="middle" font-style="normal" textLength="59.7" lengthAdjust="spacing" >04/09/2018</text>
<text x="683.2" y="744.8" font-size="10.3" fill="#000" font-weight="normal" letter-spacing="0" text-anchor="middle" font-style="normal" textLength="59.8" lengthAdjust="spacing" >8:00:00 AM</text>
<text x="878.1" y="744.8" font-size="10.3" fill="#000" font-weight="normal" letter-spacing="0" text-anchor="start" font-style="normal" textLength="35.4" lengthAdjust="spacing" >340.02</text>
<text x="1227" y="744.8" font-size="10.3" fill="#000" font-weight="normal" letter-spacing="0" text-anchor="start" font-style="normal" textLength="41.7" lengthAdjust="spacing" >4443.46</text>
<rect x="3" y="752" width="104.1" height="17" fill="#d0dce8"/>
<rect x="109" y="752" width="380.0" height="17" fill="#d0dce8"/>
<rect x="491" y="752" width="385.0" height="17" fill="#d0dce8"/>
<rect x="878" y="752" width="346.0" height="17" fill="#d0dce8"/>
<rect x="1226" y="752" width="421.0" height="17" fill="#d0dce8"/>
<text x="54.8" y="763.8" font-size="11" fill="#000" font-weight="bold" letter-spacing="0" text-anchor="middle" font-style="normal" textLength="6.8" lengthAdjust="spacing" stroke="#000" stroke-width="0.3" >7</text>
<text x="299" y="763.8" font-size="10.3" fill="#000" font-weight="normal" letter-spacing="0" text-anchor="middle" font-style="normal" textLength="59.7" lengthAdjust="spacing" >03/09/2018</text>
<text x="683.2" y="763.8" font-size="10.3" fill="#000" font-weight="normal" letter-spacing="0" text-anchor="middle" font-style="normal" textLength="59.8" lengthAdjust="spacing" >8:00:00 AM</text>
<text x="878.1" y="763.8" font-size="10.3" fill="#000" font-weight="normal" letter-spacing="0" text-anchor="start" font-style="normal" textLength="35.4" lengthAdjust="spacing" >339.92</text>
<text x="1227" y="763.8" font-size="10.3" fill="#000" font-weight="normal" letter-spacing="0" text-anchor="start" font-style="normal" textLength="41.7" lengthAdjust="spacing" >4398.81</text>
<rect x="3" y="771" width="104.1" height="17" fill="#deedfb"/>
<rect x="109" y="771" width="380.0" height="17" fill="#deedfb"/>
<rect x="491" y="771" width="385.0" height="17" fill="#deedfb"/>
<rect x="878" y="771" width="346.0" height="17" fill="#deedfb"/>
<rect x="1226" y="771" width="421.0" height="17" fill="#deedfb"/>
<text x="54.8" y="782.8" font-size="11" fill="#000" font-weight="bold" letter-spacing="0" text-anchor="middle" font-style="normal" textLength="6.8" lengthAdjust="spacing" stroke="#000" stroke-width="0.3" >8</text>
<text x="299" y="782.8" font-size="10.3" fill="#000" font-weight="normal" letter-spacing="0" text-anchor="middle" font-style="normal" textLength="59.7" lengthAdjust="spacing" >02/09/2018</text>
<text x="683.2" y="782.8" font-size="10.3" fill="#000" font-weight="normal" letter-spacing="0" text-anchor="middle" font-style="normal" textLength="59.8" lengthAdjust="spacing" >8:00:00 AM</text>
<text x="878.1" y="782.8" font-size="10.3" fill="#000" font-weight="normal" letter-spacing="0" text-anchor="start" font-style="normal" textLength="35.4" lengthAdjust="spacing" >339.79</text>
<text x="1227" y="782.8" font-size="10.3" fill="#000" font-weight="normal" letter-spacing="0" text-anchor="start" font-style="normal" textLength="41.7" lengthAdjust="spacing" >4340.89</text>
<rect x="3" y="790" width="104.1" height="17" fill="#d0dce8"/>
<rect x="109" y="790" width="380.0" height="17" fill="#d0dce8"/>
<rect x="491" y="790" width="385.0" height="17" fill="#d0dce8"/>
<rect x="878" y="790" width="346.0" height="17" fill="#d0dce8"/>
<rect x="1226" y="790" width="421.0" height="17" fill="#d0dce8"/>
<text x="54.8" y="801.8" font-size="11" fill="#000" font-weight="bold" letter-spacing="0" text-anchor="middle" font-style="normal" textLength="6.8" lengthAdjust="spacing" stroke="#000" stroke-width="0.3" >9</text>
<text x="299" y="801.8" font-size="10.3" fill="#000" font-weight="normal" letter-spacing="0" text-anchor="middle" font-style="normal" textLength="59.7" lengthAdjust="spacing" >01/09/2018</text>
<text x="683.2" y="801.8" font-size="10.3" fill="#000" font-weight="normal" letter-spacing="0" text-anchor="middle" font-style="normal" textLength="59.8" lengthAdjust="spacing" >8:00:00 AM</text>
<text x="878.1" y="801.8" font-size="10.3" fill="#000" font-weight="normal" letter-spacing="0" text-anchor="start" font-style="normal" textLength="35.4" lengthAdjust="spacing" >339.56</text>
<text x="1227" y="801.8" font-size="10.3" fill="#000" font-weight="normal" letter-spacing="0" text-anchor="start" font-style="normal" textLength="41.7" lengthAdjust="spacing" >4238.40</text>
<rect x="3" y="809" width="104.1" height="17" fill="#deedfb"/>
<rect x="109" y="809" width="380.0" height="17" fill="#deedfb"/>
<rect x="491" y="809" width="385.0" height="17" fill="#deedfb"/>
<rect x="878" y="809" width="346.0" height="17" fill="#deedfb"/>
<rect x="1226" y="809" width="421.0" height="17" fill="#deedfb"/>
<text x="54.8" y="820.8" font-size="11" fill="#000" font-weight="bold" letter-spacing="0" text-anchor="middle" font-style="normal" textLength="13.8" lengthAdjust="spacing" stroke="#000" stroke-width="0.3" >10</text>
<text x="299" y="820.8" font-size="10.3" fill="#000" font-weight="normal" letter-spacing="0" text-anchor="middle" font-style="normal" textLength="59.7" lengthAdjust="spacing" >01/09/2018</text>
<text x="683.2" y="820.8" font-size="10.3" fill="#000" font-weight="normal" letter-spacing="0" text-anchor="middle" font-style="normal" textLength="59.8" lengthAdjust="spacing" >8:00:00 AM</text>
<text x="878.1" y="820.8" font-size="10.3" fill="#000" font-weight="normal" letter-spacing="0" text-anchor="start" font-style="normal" textLength="35.4" lengthAdjust="spacing" >339.56</text>
<text x="1227" y="820.8" font-size="10.3" fill="#000" font-weight="normal" letter-spacing="0" text-anchor="start" font-style="normal" textLength="41.7" lengthAdjust="spacing" >4238.40</text>
<rect x="3" y="828" width="104.1" height="17" fill="#d0dce8"/>
<rect x="109" y="828" width="380.0" height="17" fill="#d0dce8"/>
<rect x="491" y="828" width="385.0" height="17" fill="#d0dce8"/>
<rect x="878" y="828" width="346.0" height="17" fill="#d0dce8"/>
<rect x="1226" y="828" width="421.0" height="17" fill="#d0dce8"/>
<text x="54.8" y="839.8" font-size="11" fill="#000" font-weight="bold" letter-spacing="0" text-anchor="middle" font-style="normal" textLength="13.8" lengthAdjust="spacing" stroke="#000" stroke-width="0.3" >11</text>
<text x="299" y="839.8" font-size="10.3" fill="#000" font-weight="normal" letter-spacing="0" text-anchor="middle" font-style="normal" textLength="59.7" lengthAdjust="spacing" >31/08/2018</text>
<text x="683.2" y="839.8" font-size="10.3" fill="#000" font-weight="normal" letter-spacing="0" text-anchor="middle" font-style="normal" textLength="59.8" lengthAdjust="spacing" >8:00:00 AM</text>
<text x="878.1" y="839.8" font-size="10.3" fill="#000" font-weight="normal" letter-spacing="0" text-anchor="start" font-style="normal" textLength="35.4" lengthAdjust="spacing" >339.24</text>
<text x="1227" y="839.8" font-size="10.3" fill="#000" font-weight="normal" letter-spacing="0" text-anchor="start" font-style="normal" textLength="41.7" lengthAdjust="spacing" >4095.82</text>
<rect x="3" y="847" width="104.1" height="17" fill="#deedfb"/>
<rect x="109" y="847" width="380.0" height="17" fill="#deedfb"/>
<rect x="491" y="847" width="385.0" height="17" fill="#deedfb"/>
<rect x="878" y="847" width="346.0" height="17" fill="#deedfb"/>
<rect x="1226" y="847" width="421.0" height="17" fill="#deedfb"/>
<text x="54.8" y="858.8" font-size="11" fill="#000" font-weight="bold" letter-spacing="0" text-anchor="middle" font-style="normal" textLength="13.8" lengthAdjust="spacing" stroke="#000" stroke-width="0.3" >12</text>
<text x="299" y="858.8" font-size="10.3" fill="#000" font-weight="normal" letter-spacing="0" text-anchor="middle" font-style="normal" textLength="59.7" lengthAdjust="spacing" >30/08/2018</text>
<text x="683.2" y="858.8" font-size="10.3" fill="#000" font-weight="normal" letter-spacing="0" text-anchor="middle" font-style="normal" textLength="59.8" lengthAdjust="spacing" >8:00:00 AM</text>
<text x="878.1" y="858.8" font-size="10.3" fill="#000" font-weight="normal" letter-spacing="0" text-anchor="start" font-style="normal" textLength="35.4" lengthAdjust="spacing" >339.00</text>
<text x="1227" y="858.8" font-size="10.3" fill="#000" font-weight="normal" letter-spacing="0" text-anchor="start" font-style="normal" textLength="41.7" lengthAdjust="spacing" >3988.89</text>
<rect x="3" y="866" width="104.1" height="17" fill="#d0dce8"/>
<rect x="109" y="866" width="380.0" height="17" fill="#d0dce8"/>
<rect x="491" y="866" width="385.0" height="17" fill="#d0dce8"/>
<rect x="878" y="866" width="346.0" height="17" fill="#d0dce8"/>
<rect x="1226" y="866" width="421.0" height="17" fill="#d0dce8"/>
<text x="54.8" y="877.8" font-size="11" fill="#000" font-weight="bold" letter-spacing="0" text-anchor="middle" font-style="normal" textLength="13.8" lengthAdjust="spacing" stroke="#000" stroke-width="0.3" >13</text>
<text x="299" y="877.8" font-size="10.3" fill="#000" font-weight="normal" letter-spacing="0" text-anchor="middle" font-style="normal" textLength="59.7" lengthAdjust="spacing" >29/08/2018</text>
<text x="683.2" y="877.8" font-size="10.3" fill="#000" font-weight="normal" letter-spacing="0" text-anchor="middle" font-style="normal" textLength="59.8" lengthAdjust="spacing" >8:00:00 AM</text>
<text x="878.1" y="877.8" font-size="10.3" fill="#000" font-weight="normal" letter-spacing="0" text-anchor="start" font-style="normal" textLength="35.4" lengthAdjust="spacing" >338.67</text>
<text x="1227" y="877.8" font-size="10.3" fill="#000" font-weight="normal" letter-spacing="0" text-anchor="start" font-style="normal" textLength="41.7" lengthAdjust="spacing" >3849.47</text>
<rect x="3" y="885" width="104.1" height="17" fill="#deedfb"/>
<rect x="109" y="885" width="380.0" height="17" fill="#deedfb"/>
<rect x="491" y="885" width="385.0" height="17" fill="#deedfb"/>
<rect x="878" y="885" width="346.0" height="17" fill="#deedfb"/>
<rect x="1226" y="885" width="421.0" height="17" fill="#deedfb"/>
<text x="54.8" y="896.8" font-size="11" fill="#000" font-weight="bold" letter-spacing="0" text-anchor="middle" font-style="normal" textLength="13.8" lengthAdjust="spacing" stroke="#000" stroke-width="0.3" >14</text>
<text x="299" y="896.8" font-size="10.3" fill="#000" font-weight="normal" letter-spacing="0" text-anchor="middle" font-style="normal" textLength="59.7" lengthAdjust="spacing" >28/08/2018</text>
<text x="683.2" y="896.8" font-size="10.3" fill="#000" font-weight="normal" letter-spacing="0" text-anchor="middle" font-style="normal" textLength="59.8" lengthAdjust="spacing" >8:00:00 AM</text>
<text x="878.1" y="896.8" font-size="10.3" fill="#000" font-weight="normal" letter-spacing="0" text-anchor="start" font-style="normal" textLength="35.4" lengthAdjust="spacing" >338.41</text>
<text x="1227" y="896.8" font-size="10.3" fill="#000" font-weight="normal" letter-spacing="0" text-anchor="start" font-style="normal" textLength="41.7" lengthAdjust="spacing" >3739.63</text>
<rect x="3" y="904" width="104.1" height="17" fill="#d0dce8"/>
<rect x="109" y="904" width="380.0" height="17" fill="#d0dce8"/>
<rect x="491" y="904" width="385.0" height="17" fill="#d0dce8"/>
<rect x="878" y="904" width="346.0" height="17" fill="#d0dce8"/>
<rect x="1226" y="904" width="421.0" height="17" fill="#d0dce8"/>
<text x="54.8" y="915.8" font-size="11" fill="#000" font-weight="bold" letter-spacing="0" text-anchor="middle" font-style="normal" textLength="13.8" lengthAdjust="spacing" stroke="#000" stroke-width="0.3" >15</text>
<text x="299" y="915.8" font-size="10.3" fill="#000" font-weight="normal" letter-spacing="0" text-anchor="middle" font-style="normal" textLength="59.7" lengthAdjust="spacing" >27/08/2018</text>
<text x="683.2" y="915.8" font-size="10.3" fill="#000" font-weight="normal" letter-spacing="0" text-anchor="middle" font-style="normal" textLength="59.8" lengthAdjust="spacing" >8:00:00 AM</text>
<text x="878.1" y="915.8" font-size="10.3" fill="#000" font-weight="normal" letter-spacing="0" text-anchor="start" font-style="normal" textLength="35.4" lengthAdjust="spacing" >338.34</text>
<text x="1227" y="915.8" font-size="10.3" fill="#000" font-weight="normal" letter-spacing="0" text-anchor="start" font-style="normal" textLength="41.7" lengthAdjust="spacing" >3710.05</text>
<rect x="3" y="923" width="104.1" height="17" fill="#deedfb"/>
<rect x="109" y="923" width="380.0" height="17" fill="#deedfb"/>
<rect x="491" y="923" width="385.0" height="17" fill="#deedfb"/>
<rect x="878" y="923" width="346.0" height="17" fill="#deedfb"/>
<rect x="1226" y="923" width="421.0" height="17" fill="#deedfb"/>
<text x="54.8" y="934.8" font-size="11" fill="#000" font-weight="bold" letter-spacing="0" text-anchor="middle" font-style="normal" textLength="13.8" lengthAdjust="spacing" stroke="#000" stroke-width="0.3" >16</text>
<text x="299" y="934.8" font-size="10.3" fill="#000" font-weight="normal" letter-spacing="0" text-anchor="middle" font-style="normal" textLength="59.7" lengthAdjust="spacing" >26/08/2018</text>
<text x="683.2" y="934.8" font-size="10.3" fill="#000" font-weight="normal" letter-spacing="0" text-anchor="middle" font-style="normal" textLength="59.8" lengthAdjust="spacing" >8:00:00 AM</text>
<text x="878.1" y="934.8" font-size="10.3" fill="#000" font-weight="normal" letter-spacing="0" text-anchor="start" font-style="normal" textLength="35.4" lengthAdjust="spacing" >338.27</text>
<text x="1227" y="934.8" font-size="10.3" fill="#000" font-weight="normal" letter-spacing="0" text-anchor="start" font-style="normal" textLength="41.7" lengthAdjust="spacing" >3680.48</text>
<rect x="3" y="942" width="104.1" height="17" fill="#d0dce8"/>
<rect x="109" y="942" width="380.0" height="17" fill="#d0dce8"/>
<rect x="491" y="942" width="385.0" height="17" fill="#d0dce8"/>
<rect x="878" y="942" width="346.0" height="17" fill="#d0dce8"/>
<rect x="1226" y="942" width="421.0" height="17" fill="#d0dce8"/>
<text x="54.8" y="953.8" font-size="11" fill="#000" font-weight="bold" letter-spacing="0" text-anchor="middle" font-style="normal" textLength="13.8" lengthAdjust="spacing" stroke="#000" stroke-width="0.3" >17</text>
<text x="299" y="953.8" font-size="10.3" fill="#000" font-weight="normal" letter-spacing="0" text-anchor="middle" font-style="normal" textLength="59.7" lengthAdjust="spacing" >26/08/2018</text>
<text x="683.2" y="953.8" font-size="10.3" fill="#000" font-weight="normal" letter-spacing="0" text-anchor="middle" font-style="normal" textLength="59.8" lengthAdjust="spacing" >8:00:00 AM</text>
<text x="878.1" y="953.8" font-size="10.3" fill="#000" font-weight="normal" letter-spacing="0" text-anchor="start" font-style="normal" textLength="35.4" lengthAdjust="spacing" >338.27</text>
<text x="1227" y="953.8" font-size="10.3" fill="#000" font-weight="normal" letter-spacing="0" text-anchor="start" font-style="normal" textLength="41.7" lengthAdjust="spacing" >3680.48</text>
<rect x="3" y="961" width="104.1" height="17" fill="#deedfb"/>
<rect x="109" y="961" width="380.0" height="17" fill="#deedfb"/>
<rect x="491" y="961" width="385.0" height="17" fill="#deedfb"/>
<rect x="878" y="961" width="346.0" height="17" fill="#deedfb"/>
<rect x="1226" y="961" width="421.0" height="17" fill="#deedfb"/>
<text x="54.8" y="972.8" font-size="11" fill="#000" font-weight="bold" letter-spacing="0" text-anchor="middle" font-style="normal" textLength="13.8" lengthAdjust="spacing" stroke="#000" stroke-width="0.3" >18</text>
<text x="299" y="972.8" font-size="10.3" fill="#000" font-weight="normal" letter-spacing="0" text-anchor="middle" font-style="normal" textLength="59.7" lengthAdjust="spacing" >26/08/2018</text>
<text x="683.2" y="972.8" font-size="10.3" fill="#000" font-weight="normal" letter-spacing="0" text-anchor="middle" font-style="normal" textLength="59.8" lengthAdjust="spacing" >8:00:00 AM</text>
<text x="878.1" y="972.8" font-size="10.3" fill="#000" font-weight="normal" letter-spacing="0" text-anchor="start" font-style="normal" textLength="35.4" lengthAdjust="spacing" >338.27</text>
<text x="1227" y="972.8" font-size="10.3" fill="#000" font-weight="normal" letter-spacing="0" text-anchor="start" font-style="normal" textLength="41.7" lengthAdjust="spacing" >3680.48</text>
<rect x="3" y="980" width="104.1" height="17" fill="#d0dce8"/>
<rect x="109" y="980" width="380.0" height="17" fill="#d0dce8"/>
<rect x="491" y="980" width="385.0" height="17" fill="#d0dce8"/>
<rect x="878" y="980" width="346.0" height="17" fill="#d0dce8"/>
<rect x="1226" y="980" width="421.0" height="17" fill="#d0dce8"/>
<text x="54.8" y="991.8" font-size="11" fill="#000" font-weight="bold" letter-spacing="0" text-anchor="middle" font-style="normal" textLength="13.8" lengthAdjust="spacing" stroke="#000" stroke-width="0.3" >19</text>
<text x="299" y="991.8" font-size="10.3" fill="#000" font-weight="normal" letter-spacing="0" text-anchor="middle" font-style="normal" textLength="59.7" lengthAdjust="spacing" >26/08/2018</text>
<text x="683.2" y="991.8" font-size="10.3" fill="#000" font-weight="normal" letter-spacing="0" text-anchor="middle" font-style="normal" textLength="59.8" lengthAdjust="spacing" >8:00:00 AM</text>
<text x="878.1" y="991.8" font-size="10.3" fill="#000" font-weight="normal" letter-spacing="0" text-anchor="start" font-style="normal" textLength="35.4" lengthAdjust="spacing" >338.27</text>
<text x="1227" y="991.8" font-size="10.3" fill="#000" font-weight="normal" letter-spacing="0" text-anchor="start" font-style="normal" textLength="41.7" lengthAdjust="spacing" >3680.48</text>
<rect x="3" y="999" width="104.1" height="17" fill="#deedfb"/>
<rect x="109" y="999" width="380.0" height="17" fill="#deedfb"/>
<rect x="491" y="999" width="385.0" height="17" fill="#deedfb"/>
<rect x="878" y="999" width="346.0" height="17" fill="#deedfb"/>
<rect x="1226" y="999" width="421.0" height="17" fill="#deedfb"/>
<text x="54.8" y="1010.8" font-size="11" fill="#000" font-weight="bold" letter-spacing="0" text-anchor="middle" font-style="normal" textLength="13.8" lengthAdjust="spacing" stroke="#000" stroke-width="0.3" >20</text>
<text x="299" y="1010.8" font-size="10.3" fill="#000" font-weight="normal" letter-spacing="0" text-anchor="middle" font-style="normal" textLength="59.7" lengthAdjust="spacing" >25/08/2018</text>
<text x="683.2" y="1010.8" font-size="10.3" fill="#000" font-weight="normal" letter-spacing="0" text-anchor="middle" font-style="normal" textLength="59.8" lengthAdjust="spacing" >8:00:00 AM</text>
<text x="878.1" y="1010.8" font-size="10.3" fill="#000" font-weight="normal" letter-spacing="0" text-anchor="start" font-style="normal" textLength="35.4" lengthAdjust="spacing" >338.20</text>
<text x="1227" y="1010.8" font-size="10.3" fill="#000" font-weight="normal" letter-spacing="0" text-anchor="start" font-style="normal" textLength="41.7" lengthAdjust="spacing" >3650.91</text>
</svg></body></html>
